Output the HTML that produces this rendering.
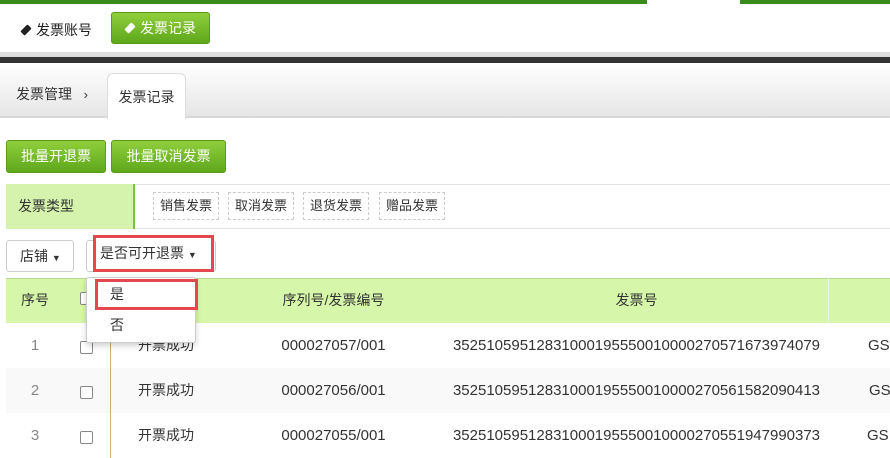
<!DOCTYPE html>
<html><head><meta charset="utf-8"><style>
*{margin:0;padding:0;box-sizing:border-box}
body{width:890px;height:457px;overflow:hidden;background:#fff;font-family:"Liberation Sans","Noto Sans CJK SC",sans-serif;font-size:13px;color:#333;position:relative}
.a{position:absolute}
.gbtn{background:linear-gradient(#8fcf3c,#5fa71c);color:#fff;border-radius:3px;text-align:center;border:1px solid #5a9a1e}
.chip{position:absolute;top:192px;height:28px;border:1px dashed #ccc;line-height:26px;padding:0 6px;font-size:13px}
.row{position:absolute;left:6px;width:884px;height:45px}
.c{position:absolute;top:0;height:45px;line-height:45px;text-align:center;font-size:14px;white-space:nowrap}
.n{font-size:15px}
.cb{position:absolute;width:13px;height:13px;border:1px solid #888;border-radius:2px;background:#fff}
.tag{display:inline-block;width:10px;height:6px;transform:rotate(-45deg);border-radius:1px;margin-right:5px;vertical-align:2px}
</style></head><body>
<div class="a" style="left:0;top:0;width:647px;height:4px;background:#3a8a1e"></div>
<div class="a" style="left:740px;top:0;width:150px;height:4px;background:#3a8a1e"></div>
<div class="a" style="left:21px;top:20px;font-size:14px;color:#222"><span class="tag" style="background:#222"></span>发票账号</div>
<div class="a gbtn" style="left:111px;top:12px;width:99px;height:32px;line-height:30px;font-size:14px"><span class="tag" style="background:#fff"></span>发票记录</div>
<div class="a" style="left:0;top:52px;width:890px;height:5px;background:#ddd"></div>
<div class="a" style="left:0;top:57px;width:890px;height:6px;background:#333"></div>
<div class="a" style="left:0;top:63px;width:890px;height:55px;background:linear-gradient(#fff,#e6e6e6);border-bottom:2px solid #d8d8d8"></div>
<div class="a" style="left:16px;top:84px;font-size:14px">发票管理 &nbsp;&nbsp;<span style="font-size:13px">›</span></div>
<div class="a" style="left:107px;top:73px;width:79px;height:46px;background:#fff;border:1px solid #ddd;border-bottom:none;border-radius:6px 6px 0 0;text-align:center;line-height:46px;font-size:14px">发票记录</div>
<div class="a gbtn" style="left:6px;top:140px;width:100px;height:33px;line-height:31px;font-size:14px">批量开退票</div>
<div class="a gbtn" style="left:111px;top:140px;width:115px;height:33px;line-height:31px;font-size:14px">批量取消发票</div>
<div class="a" style="left:6px;top:184px;width:884px;height:45px;border-top:1px solid #e2e2e2;border-bottom:1px solid #e2e2e2"></div>
<div class="a" style="left:6px;top:184px;width:129px;height:45px;background:#d6f3ae;border-right:2px solid #7cc242;line-height:45px;padding-left:12px;font-size:14px">发票类型</div>
<div class="chip" style="left:153px">销售发票</div>
<div class="chip" style="left:228px">取消发票</div>
<div class="chip" style="left:303px">退货发票</div>
<div class="chip" style="left:379px">赠品发票</div>
<div class="a" style="left:6px;top:240px;width:68px;height:32px;border:1px solid #ccc;border-radius:3px;line-height:30px;padding-left:13px;font-size:14px">店铺 <span style="font-size:9px">▼</span></div>
<div class="a" style="left:86px;top:240px;width:130px;height:32px;border:1px solid #ccc;border-radius:3px"></div>
<div class="a" style="left:93px;top:235px;width:121px;height:37px;border:3px solid #e5474f;line-height:31px;padding-left:4px;font-size:14px;background:#fff">是否可开退票 <span style="font-size:9px">▼</span></div>
<div class="a" style="left:6px;top:278px;width:884px;height:45px;background:#d6f6a9;border-top:1px solid #b8d890"></div>
<div class="c" style="left:6px;top:278px;width:58px;">序号</div>
<div class="c" style="left:222px;top:278px;width:223px;">序列号/发票编号</div>
<div class="c" style="left:445px;top:278px;width:383px;">发票号</div>
<div class="a" style="left:828px;top:278px;width:1px;height:180px;background:#eee"></div>
<div class="a" style="left:110px;top:323px;width:1px;height:135px;background:#c8b070"></div>
<div class="row" style="top:323px;background:#fff"></div>
<div class="row" style="top:368px;background:#f9f9f9"></div>
<div class="row" style="top:413px;background:#fff"></div>
<div class="a" style="left:110px;top:323px;width:1px;height:135px;background:#c8b070"></div>
<div class="c n" style="left:6px;top:323px;width:58px;color:#888">1</div>
<div class="c n" style="left:6px;top:368px;width:58px;color:#888">2</div>
<div class="c n" style="left:6px;top:413px;width:58px;color:#888">3</div>
<div class="cb" style="left:80px;top:341px"></div>
<div class="cb" style="left:80px;top:386px"></div>
<div class="cb" style="left:80px;top:431px"></div>
<div class="cb" style="left:80px;top:292px"></div>
<div class="c" style="left:110px;top:323px;width:112px">开票成功</div>
<div class="c" style="left:110px;top:368px;width:112px">开票成功</div>
<div class="c" style="left:110px;top:413px;width:112px">开票成功</div>
<div class="c n" style="left:222px;top:323px;width:223px">000027057/001</div>
<div class="c n" style="left:222px;top:368px;width:223px">000027056/001</div>
<div class="c n" style="left:222px;top:413px;width:223px">000027055/001</div>
<div class="c n" style="left:445px;top:323px;width:383px">35251059512831000195550010000270571673974079</div>
<div class="c n" style="left:445px;top:368px;width:383px">35251059512831000195550010000270561582090413</div>
<div class="c n" style="left:445px;top:413px;width:383px">35251059512831000195550010000270551947990373</div>
<div class="c n" style="left:868px;top:323px;text-align:left">GSI</div>
<div class="c n" style="left:869px;top:368px;text-align:left">GS</div>
<div class="c n" style="left:867px;top:413px;text-align:left">GSI</div>
<div class="a" style="left:86px;top:277px;width:110px;height:66px;background:#fff;border:1px solid #ccc;border-radius:3px;box-shadow:0 3px 6px rgba(0,0,0,.18)"></div>
<div class="a" style="left:95px;top:279px;width:103px;height:31px;border:3px solid #e5474f;line-height:25px;padding-left:12px;font-size:14px;background:#fff">是</div>
<div class="a" style="left:110px;top:315px;font-size:14px">否</div>
</body></html>
